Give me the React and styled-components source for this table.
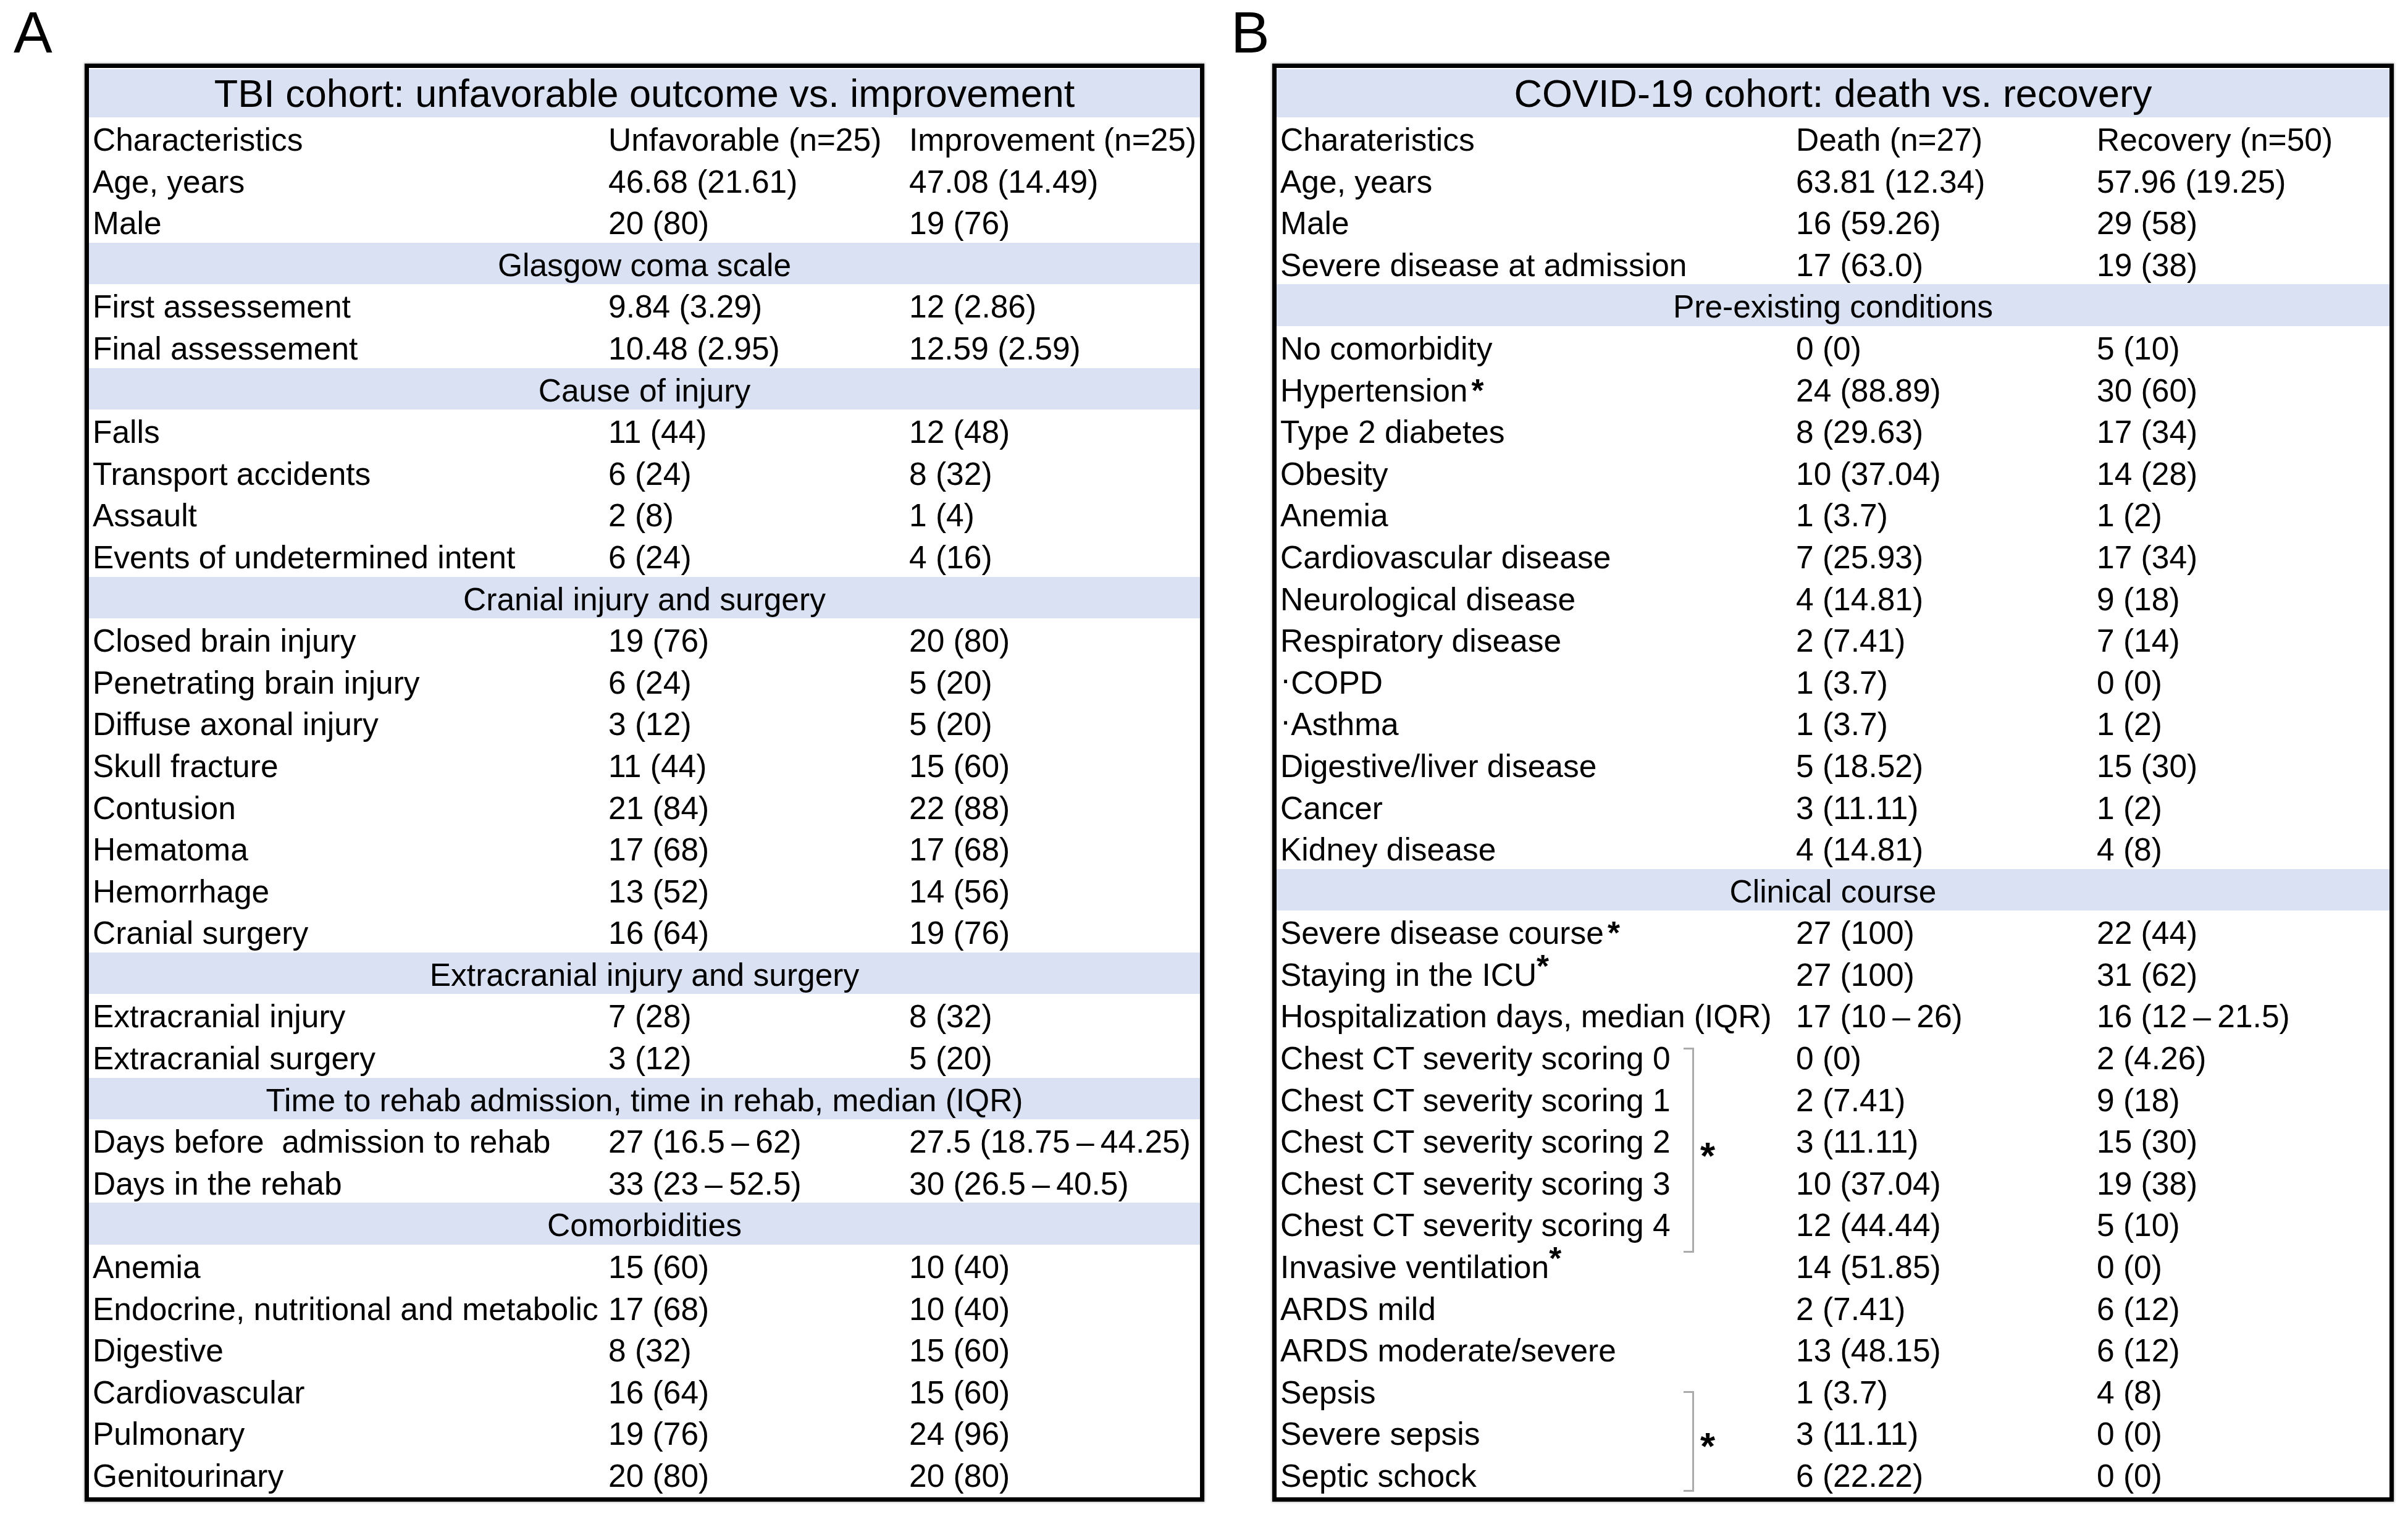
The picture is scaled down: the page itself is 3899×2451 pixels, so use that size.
import React from 'react'
import styled, { createGlobalStyle } from 'styled-components'

const GlobalStyle = createGlobalStyle`
  html, body {
    margin: 0;
    padding: 0;
    background: #fff;
  }
`

const Page = styled.div`
  display: flex;
  align-items: flex-start;
  width: 3899px;
  height: 2451px;
  box-sizing: border-box;
  padding-left: 22px;
  background: #fff;
  color: #000;
  font-family: 'Liberation Sans', Arial, sans-serif;
  overflow: hidden;
`

const Panel = styled.section`
  display: flex;
  flex-direction: column;
  margin-left: ${(p) => p.$gap}px;
`

const PanelLetter = styled.div`
  height: 103px;
  font-size: 94px;
  line-height: 106px;
`

const Box = styled.div`
  box-sizing: border-box;
  width: ${(p) => p.$width}px;
  margin-left: ${(p) => p.$indent}px;
  border: 7px solid #000;
  padding: 2px 0 3px;
  background: #fff;
  box-shadow: 0 0 3px 1px rgba(0, 0, 0, 0.3);
`

const TitleBand = styled.div`
  height: 78px;
  line-height: 78px;
  background: #d9e1f2;
  text-align: center;
  font-size: 63px;
  white-space: nowrap;
`

const Row = styled.div`
  display: grid;
  grid-template-columns: 835px 487px 1fr;
  height: 67.6px;
`

const Cell = styled.div`
  padding: 6px 0 0 6px;
  line-height: 61.6px;
  font-size: 51.5px;
  white-space: pre;
`

const SectionBand = styled.div`
  box-sizing: border-box;
  height: 67.6px;
  padding-top: 6px;
  line-height: 61.6px;
  font-size: 51.5px;
  text-align: center;
  background: #d9e1f2;
  white-space: pre;
`

const Asterisk = styled.span`
  font-weight: 700;
  line-height: 0;
  margin-left: ${(p) => (p.$raised ? 0 : 6)}px;
  vertical-align: ${(p) => (p.$raised ? '14px' : 'baseline')};
`

const Dot = styled.span`
  line-height: 0;
  vertical-align: 6px;
`

// rows with a bracket drawn over the label column
const Bracketed = styled.div`
  display: grid;

  & > * {
    grid-area: 1 / 1;
  }
`

const RowStack = styled.div`
  display: flex;
  flex-direction: column;
`

const BracketLine = styled.div`
  align-self: start;
  justify-self: start;
  box-sizing: border-box;
  width: 17px;
  height: ${(p) => p.$height}px;
  margin: ${(p) => p.$top}px 0 -600px 659px;
  border: 3px solid #ababab;
  border-left: none;
`

const BracketStar = styled.div`
  align-self: start;
  justify-self: start;
  margin: ${(p) => p.$top}px 0 -600px 686px;
  font-size: 62px;
  font-weight: 700;
  line-height: 62px;
`

const dash = '\u2009\u2013\u2009'

const tbiRows = [
  ['Characteristics', 'Unfavorable (n=25)', 'Improvement (n=25)'],
  ['Age, years', '46.68 (21.61)', '47.08 (14.49)'],
  ['Male', '20 (80)', '19 (76)'],
  'Glasgow coma scale',
  ['First assessement', '9.84 (3.29)', '12 (2.86)'],
  ['Final assessement', '10.48 (2.95)', '12.59 (2.59)'],
  'Cause of injury',
  ['Falls', '11 (44)', '12 (48)'],
  ['Transport accidents', '6 (24)', '8 (32)'],
  ['Assault', '2 (8)', '1 (4)'],
  ['Events of undetermined intent', '6 (24)', '4 (16)'],
  'Cranial injury and surgery',
  ['Closed brain injury', '19 (76)', '20 (80)'],
  ['Penetrating brain injury', '6 (24)', '5 (20)'],
  ['Diffuse axonal injury', '3 (12)', '5 (20)'],
  ['Skull fracture', '11 (44)', '15 (60)'],
  ['Contusion', '21 (84)', '22 (88)'],
  ['Hematoma', '17 (68)', '17 (68)'],
  ['Hemorrhage', '13 (52)', '14 (56)'],
  ['Cranial surgery', '16 (64)', '19 (76)'],
  'Extracranial injury and surgery',
  ['Extracranial injury', '7 (28)', '8 (32)'],
  ['Extracranial surgery', '3 (12)', '5 (20)'],
  'Time to rehab admission, time in rehab, median (IQR)',
  ['Days before  admission to rehab', `27 (16.5${dash}62)`, `27.5 (18.75${dash}44.25)`],
  ['Days in the rehab', `33 (23${dash}52.5)`, `30 (26.5${dash}40.5)`],
  'Comorbidities',
  ['Anemia', '15 (60)', '10 (40)'],
  ['Endocrine, nutritional and metabolic', '17 (68)', '10 (40)'],
  ['Digestive', '8 (32)', '15 (60)'],
  ['Cardiovascular', '16 (64)', '15 (60)'],
  ['Pulmonary', '19 (76)', '24 (96)'],
  ['Genitourinary', '20 (80)', '20 (80)'],
]

const covidTop = [
  ['Charateristics', 'Death (n=27)', 'Recovery (n=50)'],
  ['Age, years', '63.81 (12.34)', '57.96 (19.25)'],
  ['Male', '16 (59.26)', '29 (58)'],
  ['Severe disease at admission', '17 (63.0)', '19 (38)'],
  'Pre-existing conditions',
  ['No comorbidity', '0 (0)', '5 (10)'],
  [<>Hypertension<Asterisk>*</Asterisk></>, '24 (88.89)', '30 (60)'],
  ['Type 2 diabetes', '8 (29.63)', '17 (34)'],
  ['Obesity', '10 (37.04)', '14 (28)'],
  ['Anemia', '1 (3.7)', '1 (2)'],
  ['Cardiovascular disease', '7 (25.93)', '17 (34)'],
  ['Neurological disease', '4 (14.81)', '9 (18)'],
  ['Respiratory disease', '2 (7.41)', '7 (14)'],
  [<><Dot>·</Dot>COPD</>, '1 (3.7)', '0 (0)'],
  [<><Dot>·</Dot>Asthma</>, '1 (3.7)', '1 (2)'],
  ['Digestive/liver disease', '5 (18.52)', '15 (30)'],
  ['Cancer', '3 (11.11)', '1 (2)'],
  ['Kidney disease', '4 (14.81)', '4 (8)'],
  'Clinical course',
  [<>Severe disease course<Asterisk>*</Asterisk></>, '27 (100)', '22 (44)'],
  [<>Staying in the ICU<Asterisk $raised>*</Asterisk></>, '27 (100)', '31 (62)'],
  ['Hospitalization days, median (IQR)', `17 (10${dash}26)`, `16 (12${dash}21.5)`],
]

const covidChest = [
  ['Chest CT severity scoring 0', '0 (0)', '2 (4.26)'],
  ['Chest CT severity scoring 1', '2 (7.41)', '9 (18)'],
  ['Chest CT severity scoring 2', '3 (11.11)', '15 (30)'],
  ['Chest CT severity scoring 3', '10 (37.04)', '19 (38)'],
  ['Chest CT severity scoring 4', '12 (44.44)', '5 (10)'],
]

const covidMiddle = [
  [<>Invasive ventilation<Asterisk $raised>*</Asterisk></>, '14 (51.85)', '0 (0)'],
  ['ARDS mild', '2 (7.41)', '6 (12)'],
  ['ARDS moderate/severe', '13 (48.15)', '6 (12)'],
]

const covidSepsis = [
  ['Sepsis', '1 (3.7)', '4 (8)'],
  ['Severe sepsis', '3 (11.11)', '0 (0)'],
  ['Septic schock', '6 (22.22)', '0 (0)'],
]

const TableRows = ({ rows }) =>
  rows.map((row, i) =>
    typeof row === 'string' ? (
      <SectionBand key={i}>{row}</SectionBand>
    ) : (
      <Row key={i}>
        <Cell>{row[0]}</Cell>
        <Cell>{row[1]}</Cell>
        <Cell>{row[2]}</Cell>
      </Row>
    )
  )

const BracketGroup = ({ rows, lineTop, lineHeight, starTop }) => (
  <Bracketed>
    <RowStack>
      <TableRows rows={rows} />
    </RowStack>
    <BracketLine $top={lineTop} $height={lineHeight} />
    <BracketStar $top={starTop}>*</BracketStar>
  </Bracketed>
)

const App = () => {
  return (
    <Page>
      <GlobalStyle />
      <Panel $gap={0}>
        <PanelLetter>A</PanelLetter>
        <Box $width={1813} $indent={115}>
          <TitleBand>TBI cohort: unfavorable outcome vs. improvement</TitleBand>
          <TableRows rows={tbiRows} />
        </Box>
      </Panel>

      <Panel $gap={43}>
        <PanelLetter>B</PanelLetter>
        <Box $width={1816} $indent={67}>
          <TitleBand>COVID-19 cohort: death vs. recovery</TitleBand>
          <TableRows rows={covidTop} />
          <BracketGroup rows={covidChest} lineTop={19} lineHeight={332} starTop={163} />
          <TableRows rows={covidMiddle} />
          <BracketGroup rows={covidSepsis} lineTop={34} lineHeight={163} starTop={92} />
        </Box>
      </Panel>
    </Page>
  )
}

export default App
